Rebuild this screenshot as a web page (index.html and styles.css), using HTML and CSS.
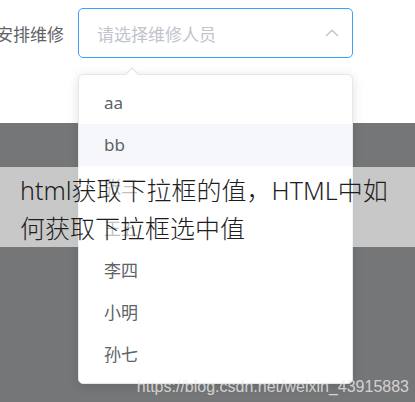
FILE: index.html
```html
<!DOCTYPE html>
<html lang="zh-CN">
<head>
<meta charset="utf-8">
<title>安排维修</title>
<link rel="stylesheet" href="styles.css">
</head>
<body>
<div class="page">
  <div class="form-row">
    <label class="form-label">安排维修</label>
    <div class="select">
      <span class="placeholder">请选择维修人员</span>
      <svg class="chevron" width="14" height="8" viewBox="0 0 14 8"><polyline points="1,7 7,1.2 13,7" fill="none" stroke="#c0c4cc" stroke-width="1.4"/></svg>
    </div>
  </div>
  <div class="white-gap"></div>
  <div class="mask"></div>

  <ul class="dropdown">
    <li class="item">aa</li>
    <li class="item hover">bb</li>
    <li class="item">张三</li>
    <li class="item">王五</li>
    <li class="item">李四</li>
    <li class="item">小明</li>
    <li class="item">孙七</li>
  </ul>

  <div class="title-band">html获取下拉框的值，HTML中如何获取下拉框选中值</div>
  <div class="watermark">https://blog.csdn.net/weixin_43915883</div>
</div>
</body>
</html>
```
FILE: styles.css
```css
html, body {
  margin: 0;
  padding: 0;
  background: #fff;
}
.page {
  position: relative;
  width: 415px;
  height: 402px;
  overflow: hidden;
  font-family: "Noto Sans", "Noto Sans CJK SC", sans-serif;
  display: flex;
  flex-direction: column;
}
.form-row {
  display: flex;
  align-items: center;
  padding-top: 8px;
  height: 50px;
  flex: none;
}
.form-label {
  width: 78px;
  box-sizing: border-box;
  padding-right: 14px;
  text-align: right;
  white-space: nowrap;
  font-size: 17px;
  color: #606266;
  direction: rtl;
  overflow: visible;
}
.select {
  width: 275px;
  height: 50px;
  box-sizing: border-box;
  border: 1px solid #409eff;
  border-radius: 5px;
  display: flex;
  align-items: center;
  padding-left: 18px;
  padding-right: 13px;
}
.placeholder {
  flex: 1;
  font-size: 17px;
  color: #c0c4cc;
}
.chevron {
  display: block;
}
.white-gap {
  height: 65px;
  flex: none;
}
.mask {
  flex: 1;
  background: #757677;
}
.dropdown {
  position: absolute;
  left: 78px;
  top: 74px;
  width: 275px;
  box-sizing: border-box;
  margin: 0;
  padding: 7px 0;
  list-style: none;
  background: #fff;
  border: 1px solid #e4e7ed;
  border-radius: 5px;
  box-shadow: 0 2px 12px rgba(0, 0, 0, 0.12);
}
.dropdown::before,
.dropdown::after {
  content: "";
  position: absolute;
  left: 46px;
  width: 0;
  height: 0;
  border-style: solid;
  border-color: transparent;
}
.dropdown::before {
  top: -8px;
  border-width: 0 7px 7px 7px;
  border-bottom-color: #e4e7ed;
}
.dropdown::after {
  top: -6px;
  border-width: 0 7px 7px 7px;
  border-bottom-color: #fff;
}
.item {
  height: 42px;
  line-height: 42px;
  padding-left: 25px;
  font-size: 17px;
  color: #606266;
}
.item.hover {
  background: #f5f7fa;
}
.title-band {
  position: absolute;
  left: 0;
  top: 167px;
  width: 415px;
  height: 80px;
  box-sizing: border-box;
  padding: 4px 14px 0 20px;
  background: rgba(255, 255, 255, 0.6);
  font-size: 25px;
  line-height: 38px;
  color: #1e1e1e;
  font-family: "Noto Sans", "Noto Sans CJK SC", sans-serif;
  font-weight: 300;
}
.watermark {
  position: absolute;
  right: 6px;
  top: 377px;
  font-family: "Liberation Sans", Arial, sans-serif;
  font-size: 16px;
  line-height: 20px;
  color: rgba(235, 235, 235, 0.8);
  white-space: nowrap;
}
```
